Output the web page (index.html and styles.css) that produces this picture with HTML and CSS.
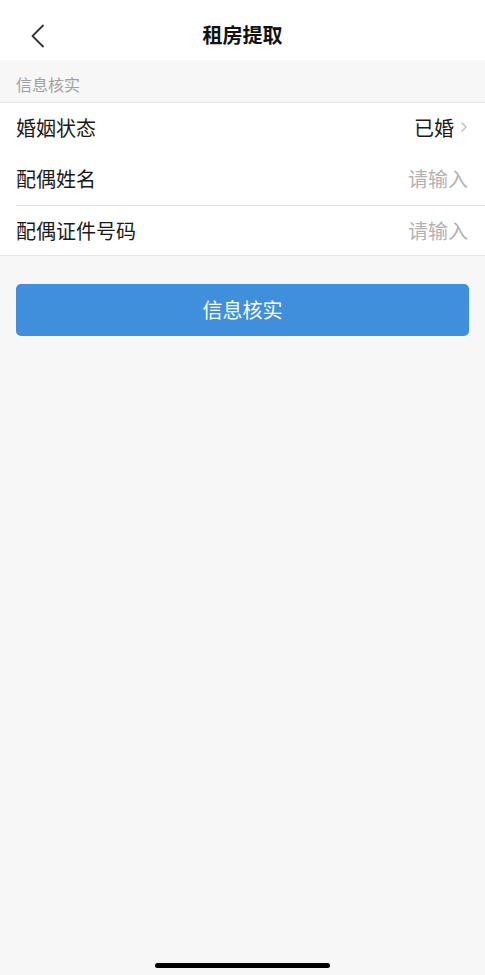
FILE: index.html
```html
<!DOCTYPE html>
<html lang="zh-CN">
<head>
    <meta charset="UTF-8">
    <meta name="viewport" content="width=device-width, initial-scale=1.0">
    <title>租房提取</title>
    <link rel="stylesheet" href="styles.css">
</head>
<body>
<header class="nav-bar">
    <span class="back">
        <svg width="16" height="24" viewBox="0 0 16 24">
            <path d="M13 1.5 L2.5 12 L13 22.5" fill="none" stroke="#333" stroke-width="1.8" stroke-linecap="round" stroke-linejoin="round"/>
        </svg>
    </span>
    <h1>租房提取</h1>
</header>
<main>
    <div class="group-title">信息核实</div>
    <section class="form-list">
        <div class="form-row">
            <span class="label">婚姻状态</span>
            <span class="value">已婚
                <svg class="arrow" width="8" height="14" viewBox="0 0 8 14">
                    <path d="M2 3 L6 7 L2 11" fill="none" stroke="#c2c2c2" stroke-width="1.5" stroke-linecap="round" stroke-linejoin="round"/>
                </svg>
            </span>
        </div>
        <div class="form-row">
            <span class="label">配偶姓名</span>
            <span class="placeholder">请输入</span>
        </div>
        <div class="form-row line-top">
            <span class="label">配偶证件号码</span>
            <span class="placeholder">请输入</span>
        </div>
    </section>
    <div class="actions">
        <button type="button" class="btn-primary">信息核实</button>
    </div>
</main>
<div class="home-bar"></div>
</body>
</html>
```
FILE: styles.css
```css
body {
    margin: 0;
    padding: 0;
    height: 975px;
    background-color: #f7f7f7;
    font-family: "Noto Sans CJK SC", "Noto Sans", sans-serif;
    color: #1a1a1a;
    overflow: hidden;
    position: relative;
}

.nav-bar {
    height: 60px;
    background-color: #fff;
    display: flex;
    align-items: center;
    justify-content: center;
    position: relative;
}

.nav-bar h1 {
    margin: 0;
    font-size: 20px;
    font-weight: 700;
    color: #111;
    padding-top: 8px;
}

.back {
    position: absolute;
    left: 30px;
    top: 24px;
    display: flex;
}

.group-title {
    height: 42px;
    padding: 6px 16px 0;
    display: flex;
    align-items: center;
    font-size: 16px;
    color: #a0a0a0;
    box-sizing: border-box;
}

.form-list {
    background-color: #fff;
    border-top: 1px solid #e6e6e6;
    border-bottom: 1px solid #e6e6e6;
    padding-left: 16px;
}

.form-row {
    height: 51px;
    display: flex;
    align-items: center;
    justify-content: space-between;
    padding-right: 17px;
    padding-bottom: 3px;
    box-sizing: border-box;
    font-size: 20px;
}

.form-row.line-top {
    border-top: 1px solid #e3e3e3;
    height: 50px;
    padding-bottom: 1px;
}

.label {
    color: #1a1a1a;
}

.value {
    display: flex;
    align-items: center;
    gap: 6px;
    color: #1a1a1a;
}

.placeholder {
    color: #b3b3b3;
}

.actions {
    padding: 28px 16px 0;
}

.btn-primary {
    width: 100%;
    height: 52px;
    border: none;
    border-radius: 5px;
    background-color: #3f8fdc;
    color: #fff;
    font-family: inherit;
    font-size: 20px;
    padding-bottom: 3px;
    cursor: pointer;
}

.home-bar {
    position: absolute;
    left: 155px;
    bottom: 7px;
    width: 175px;
    height: 5px;
    border-radius: 3px;
    background-color: #000;
}
```
